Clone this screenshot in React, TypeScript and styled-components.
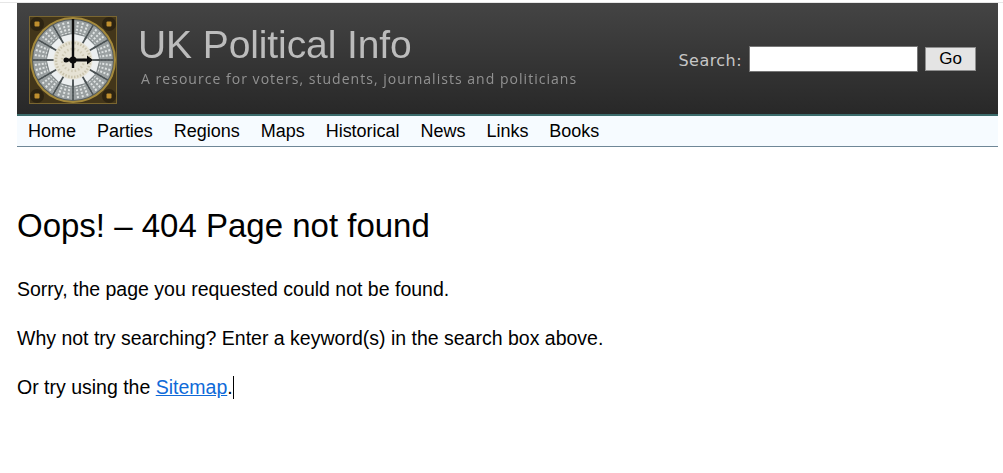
import React from "react";
import styled, { createGlobalStyle } from "styled-components";

const Global = createGlobalStyle`
  html, body { margin: 0; padding: 0; background: #fff; }
  body { font-family: "Liberation Sans", Arial, sans-serif; color: #000; }
`;
const Page = styled.div`
  height: 473px;
  overflow: hidden;
  box-sizing: border-box;
  padding: 3px 5px 0 17px;
  position: relative;
`;
const TopEdge = styled.div`
  position: absolute;
  left: 0;
  right: 0;
  top: 2px;
  height: 1px;
  background: #e6e6e6;
`;
const Header = styled.header`
  height: 111px;
  display: flex;
  align-items: stretch;
  background: linear-gradient(#444444, #282828);
  border-bottom: 2px solid #3b6b6b;
`;
const LogoWrap = styled.div`
  width: 88px;
  height: 88px;
  margin: 13px 0 0 12px;
  flex: none;
  filter: blur(0.45px);
`;
const Brand = styled.div`
  margin-left: 21px;
  padding-top: 20px;
  flex: 1;
`;
const Title = styled.div`
  font-size: 39px;
  line-height: 44px;
  color: #bcbcbc;
  letter-spacing: -0.1px;
  filter: blur(0.3px);
`;
const Tagline = styled.div`
  font-family: "Open Sans", sans-serif;
  font-size: 14px;
  line-height: 18px;
  margin: 3px 0 0 3px;
  letter-spacing: 1.03px;
  color: #929292;
  filter: blur(0.2px);
`;
const SearchForm = styled.form`
  display: flex;
  align-items: center;
  height: 24px;
  margin: 44px 22px 0 0;
`;
const SearchLabel = styled.label`
  font-family: "DejaVu Sans", sans-serif;
  font-size: 16px;
  line-height: 24px;
  padding-top: 3px;
  color: #c6c6c6;
  margin-right: 7px;
  letter-spacing: 0.45px;
`;
const SearchInput = styled.input`
  width: 169px;
  height: 26px;
  box-sizing: border-box;
  border: 1px solid #767676;
  background: #fff;
  padding: 0;
  margin-right: 7px;
`;
const GoButton = styled.button`
  width: 51px;
  height: 24px;
  box-sizing: border-box;
  border: 1px solid #8f8f8f;
  background: #e4e4e4;
  font-family: "Liberation Sans", sans-serif;
  font-size: 17px;
  color: #000;
  padding: 0;
`;
const Nav = styled.nav`
  height: 30px;
  display: flex;
  align-items: center;
  gap: 21px;
  padding-left: 11px;
  background: #f6fbff;
  border-bottom: 1px solid #6f8797;
`;
const NavLink = styled.a`
  font-size: 18px;
  letter-spacing: -0.02px;
  color: #000;
  text-decoration: none;
`;
const Main = styled.main`
  padding-top: 60px;
`;
const Heading = styled.h1`
  font-size: 33px;
  line-height: 38px;
  font-weight: 400;
  margin: 0 0 33px;
`;
const Para = styled.p`
  font-size: 19.5px;
  line-height: 23px;
  margin: 0 0 26px;
`;
const SiteLink = styled.a`
  color: #0f6ad8;
  text-decoration: underline;
`;
const Caret = styled.span`
  display: inline-block;
  width: 1px;
  height: 23px;
  background: #000;
  vertical-align: -5px;
`;

function ClockLogo() {
  const rays = Array.from({ length: 12 }, (_, i) => i * 30);
  const tiles = Array.from({ length: 12 }, (_, i) => i * 30 + 15);
  const ticks = Array.from({ length: 48 }, (_, i) => i * 7.5);
  const corners: [number, number][] = [[8, 8], [80, 8], [8, 80], [80, 80]];
  return (
    <svg width="88" height="88" viewBox="0 0 88 88" aria-label="Clock face">
      <rect width="88" height="88" fill="#43361a" />
      <rect x="0.5" y="0.5" width="87" height="87" fill="none" stroke="#7a6630" />
      {corners.map(([x, y]) => (
        <g key={`${x}-${y}`}>
          <circle cx={x} cy={y} r="7" fill="#2d2412" />
          <rect x={x - 2.5} y={y - 2.5} width="5" height="5" rx="1" fill="#c08f2e" />
        </g>
      ))}
      <circle cx="44" cy="44" r="43" fill="#a58a3c" />
      <circle cx="44" cy="44" r="41" fill="#565c5e" />
      <circle cx="44" cy="44" r="40" fill="#9aa0a1" />
      {ticks.map((a) => (
        <line key={a} x1="44" y1="5.5" x2="44" y2="17" stroke="#dfe3e3" strokeWidth="2" strokeDasharray="2 1.5" transform={`rotate(${a} 44 44)`} />
      ))}
      <circle cx="44" cy="44" r="26.5" fill="#767d7f" />
      {tiles.map((a) => (
        <rect key={a} x="38.5" y="18.5" width="11" height="7.5" fill="#eceff0" transform={`rotate(${a} 44 44)`} />
      ))}
      {rays.map((a) => (
        <line key={a} x1="44" y1="4" x2="44" y2="26" stroke="#4a5153" strokeWidth="1.8" transform={`rotate(${a} 44 44)`} />
      ))}
      <circle cx="44" cy="44" r="19.5" fill="#e6e2d4" />
      <circle cx="44" cy="44" r="17" fill="none" stroke="#c9c3ac" strokeWidth="2.5" strokeDasharray="1.5 1.5" />
      <circle cx="44" cy="44" r="11" fill="none" stroke="#cfc9b4" strokeWidth="2.5" strokeDasharray="1.5 2" />
      <line x1="44" y1="3" x2="44" y2="52" stroke="#0c0c0c" strokeWidth="2.4" />
      <line x1="36" y1="44" x2="62" y2="44" stroke="#0c0c0c" strokeWidth="3" />
      <path d="M58 39.5 L64 44 L58 48.5 Z" fill="#0c0c0c" />
      <circle cx="44" cy="44" r="3.5" fill="#0c0c0c" />
      <circle cx="37" cy="44" r="2.5" fill="#0c0c0c" />
    </svg>
  );
}

const navItems = ["Home", "Parties", "Regions", "Maps", "Historical", "News", "Links", "Books"];

export default function App() {
  return (
    <>
      <Global />
      <Page>
        <TopEdge />
        <Header>
          <LogoWrap>
            <ClockLogo />
          </LogoWrap>
          <Brand>
            <Title>UK Political Info</Title>
            <Tagline>A resource for voters, students, journalists and politicians</Tagline>
          </Brand>
          <SearchForm onSubmit={(e) => e.preventDefault()}>
            <SearchLabel htmlFor="q">Search:</SearchLabel>
            <SearchInput id="q" type="text" />
            <GoButton type="submit">Go</GoButton>
          </SearchForm>
        </Header>
        <Nav>
          {navItems.map((n) => (
            <NavLink key={n} href="#">{n}</NavLink>
          ))}
        </Nav>
        <Main>
          <Heading>Oops! – 404 Page not found</Heading>
          <Para>Sorry, the page you requested could not be found.</Para>
          <Para>Why not try searching? Enter a keyword(s) in the search box above.</Para>
          <Para>
            Or try using the <SiteLink href="#">Sitemap</SiteLink>.<Caret />
          </Para>
        </Main>
      </Page>
    </>
  );
}
